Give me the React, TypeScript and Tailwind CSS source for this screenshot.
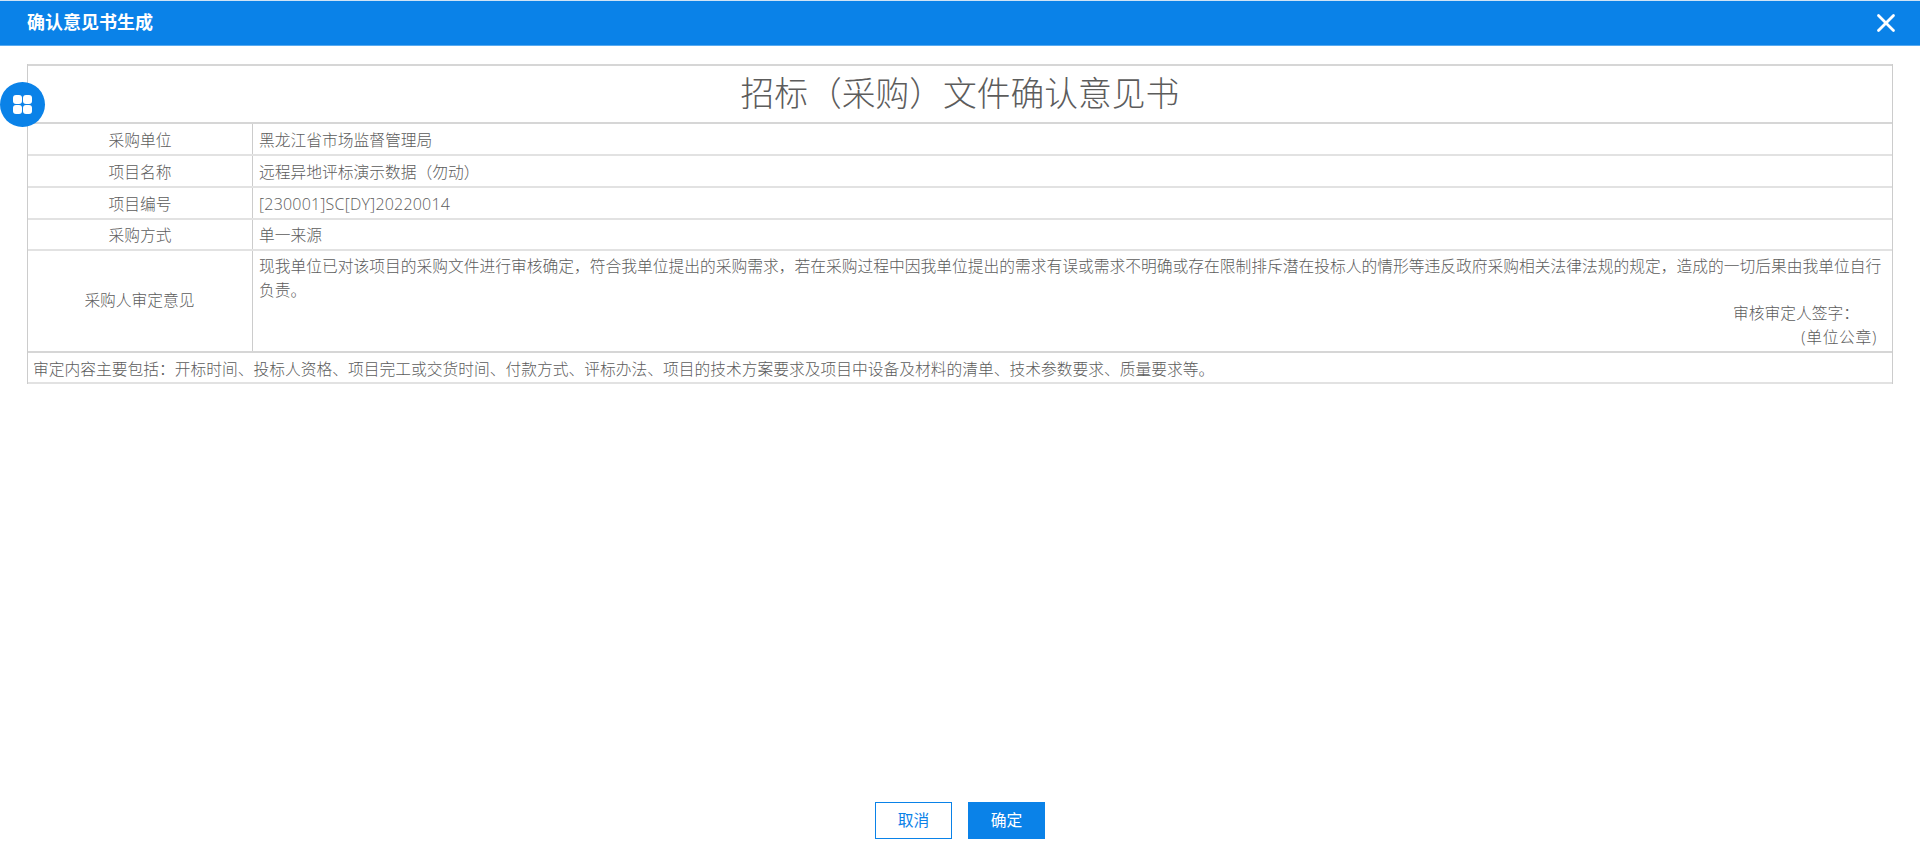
import React from "react";
import { X } from "lucide-react";

const rows: [string, React.ReactNode][] = [
  ["采购单位", "黑龙江省市场监督管理局"],
  ["项目名称", "远程异地评标演示数据（勿动）"],
  ["项目编号", <span className="text-[16px] tracking-[0.2px]">[230001]SC[DY]20220014</span>],
  ["采购方式", "单一来源"],
];

export default function App() {
  return (
    <div
      className="relative flex h-screen flex-col bg-white text-[15.75px] leading-[23.625px] font-light text-[#5c5c5c]"
      style={{ fontFamily: '"Open Sans", "Noto Sans CJK SC", sans-serif' }}
    >
      <header className="flex h-[46px] shrink-0 items-center justify-between border-t border-[#cfe3f5] border-b border-b-[#58aaf0] bg-[#0a82e8] pl-[27px] pr-[19px] text-white">
        <span className="text-[18px] font-bold">确认意见书生成</span>
        <X size={30} strokeWidth={2.2} />
      </header>

      <main className="mt-[18px] flex-1 px-[27px]">
        <div className="border-x border-[#ccc]">
          <h1 className="flex h-[60px] items-center justify-center border-y-2 border-[#d6d6d6] text-[33.75px] font-light text-[#5c5c5c]">
            招标（采购）文件确认意见书
          </h1>
          {rows.map(([k, v], i) => (
            <div key={k} className={`flex ${i === 3 ? "h-[31px]" : "h-[32px]"} border-b-2 border-[#e2e2e2]`}>
              <div className="flex w-[225px] shrink-0 items-center justify-center border-r border-[#ccc] pt-[3px]">{k}</div>
              <div className="flex flex-1 items-center px-[6px] pt-[3px]">{v}</div>
            </div>
          ))}
          <div className="flex h-[102px] border-b-2 border-[#d6d6d6]">
            <div className="flex w-[225px] shrink-0 items-center justify-center border-r border-[#ccc] pr-[1px]">采购人审定意见</div>
            <div className="flex-1 px-[6px] pt-[4px]">
              <p>
                现我单位已对该项目的采购文件进行审核确定，符合我单位提出的采购需求，若在采购过程中因我单位提出的需求有误或需求不明确或存在限制排斥潜在投标人的情形等违反政府采购相关法律法规的规定，造成的一切后果由我单位自行负责。
              </p>
              <p className="pr-[27px] text-right">审核审定人签字：</p>
              <p className="pr-[9px] text-right tracking-[0.7px]">(单位公章)</p>
            </div>
          </div>
          <div className="flex h-[31px] items-center border-b-2 border-[#e2e2e2] px-[5px] pt-[4px]">
            审定内容主要包括：开标时间、投标人资格、项目完工或交货时间、付款方式、评标办法、项目的技术方案要求及项目中设备及材料的清单、技术参数要求、质量要求等。
          </div>
        </div>
      </main>

      <footer className="flex shrink-0 justify-center gap-4 pb-[27px] font-normal">
        <button className="h-[37px] w-[77px] border border-[#0a82e8] bg-white text-[#0a82e8]">取消</button>
        <button className="h-[37px] w-[77px] bg-[#0a82e8] text-white">确定</button>
      </footer>

      <div className="absolute left-0 top-[82px] flex h-[45px] w-[45px] items-center justify-center rounded-full bg-[#0a82e8]">
        <div className="grid grid-cols-2 gap-[1px]">
          <span className="h-[9px] w-[9px] rounded-[3px] bg-white" />
          <span className="h-[9px] w-[9px] rounded-[3px] bg-white" />
          <span className="h-[9px] w-[9px] rounded-[3px] bg-white" />
          <span className="h-[9px] w-[9px] rounded-[3px] bg-white" />
        </div>
      </div>
    </div>
  );
}
